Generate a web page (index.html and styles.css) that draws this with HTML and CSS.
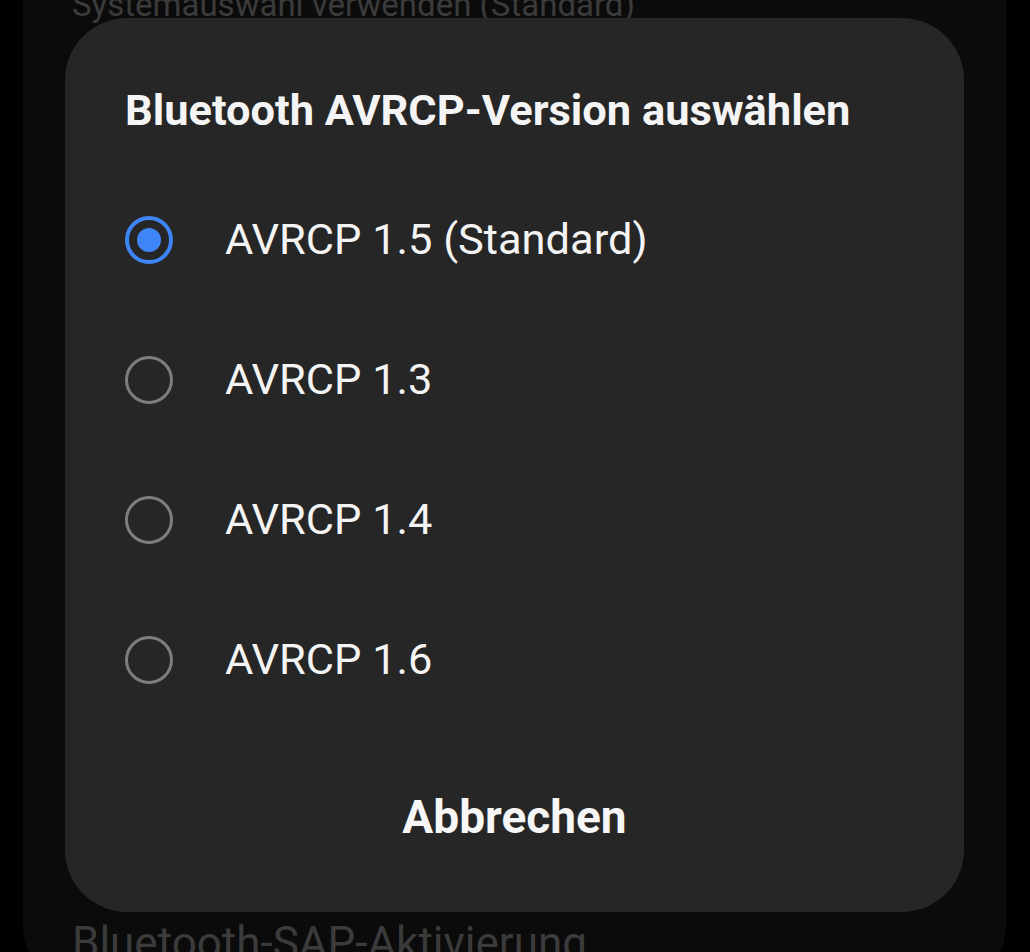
FILE: index.html
```html
<!DOCTYPE html>
<html lang="de">
<head>
<meta charset="utf-8">
<title>Bluetooth AVRCP-Version auswählen</title>
<link rel="stylesheet" href="styles.css">
</head>
<body>
<div class="screen">
  <div class="sheet">
    <div class="bg-item bg-top">Systemauswahl verwenden (Standard)</div>
    <div class="spacer"></div>
    <div class="bg-item bg-bottom">Bluetooth-SAP-Aktivierung</div>
  </div>
  <div class="dialog">
    <h1 class="title">Bluetooth AVRCP-Version auswählen</h1>
    <ul class="options">
      <li class="option selected"><span class="radio"></span><span class="label">AVRCP 1.5 (Standard)</span></li>
      <li class="option"><span class="radio"></span><span class="label">AVRCP 1.3</span></li>
      <li class="option"><span class="radio"></span><span class="label">AVRCP 1.4</span></li>
      <li class="option"><span class="radio"></span><span class="label">AVRCP 1.6</span></li>
    </ul>
    <div class="actions"><span class="cancel">Abbrechen</span></div>
  </div>
</div>
</body>
</html>
```

FILE: styles.css
```css
html, body {
  margin: 0;
  padding: 0;
  background: #000;
  width: 1030px;
  height: 952px;
  overflow: hidden;
  font-family: Roboto, "Noto Sans", "Liberation Sans", sans-serif;
}

.screen {
  position: relative;
  width: 1030px;
  height: 952px;
  overflow: hidden;
}

.sheet {
  margin-left: 23px;
  width: 983px;
  height: 1010px;
  margin-top: -15px;
  background: #0b0b0b;
  border-radius: 0 0 70px 70px;
  display: flex;
  flex-direction: column;
}

.bg-item {
  color: #3b3b3b;
  padding-left: 49px;
  white-space: nowrap;
}

.bg-top {
  font-size: 33px;
  line-height: 40px;
}

.spacer {
  height: 892px;
}

.bg-bottom {
  font-size: 44px;
  line-height: 52px;
}

.dialog {
  position: absolute;
  left: 65px;
  top: 18px;
  width: 899px;
  height: 894px;
  background: #262626;
  border-radius: 62px;
  box-sizing: border-box;
  padding: 67px 0 0 60px;
  display: flex;
  flex-direction: column;
}

.title {
  margin: 0;
  color: #f4f4f4;
  font-size: 43.4px;
  font-weight: 700;
  line-height: 52px;
}

.options {
  list-style: none;
  margin: 33px 0 0 0;
  padding: 0;
  display: flex;
  flex-direction: column;
}

.option {
  height: 140px;
  display: flex;
  align-items: center;
}

.radio {
  width: 48px;
  height: 48px;
  box-sizing: border-box;
  border-radius: 50%;
  border: 3px solid #7e7e7e;
  flex: none;
  display: flex;
  align-items: center;
  justify-content: center;
}

.selected .radio {
  border: 4px solid #3e86f8;
}

.selected .radio::after {
  content: "";
  width: 24px;
  height: 24px;
  border-radius: 50%;
  background: #3e86f8;
}

.label {
  margin-left: 52px;
  color: #f4f4f4;
  font-size: 43.4px;
  line-height: 52px;
  white-space: nowrap;
}

.actions {
  margin-top: 59px;
  display: flex;
  justify-content: center;
  padding-right: 60px;
}

.cancel {
  color: #f6f6f6;
  font-size: 46px;
  font-weight: 700;
  line-height: 56px;
}
```
